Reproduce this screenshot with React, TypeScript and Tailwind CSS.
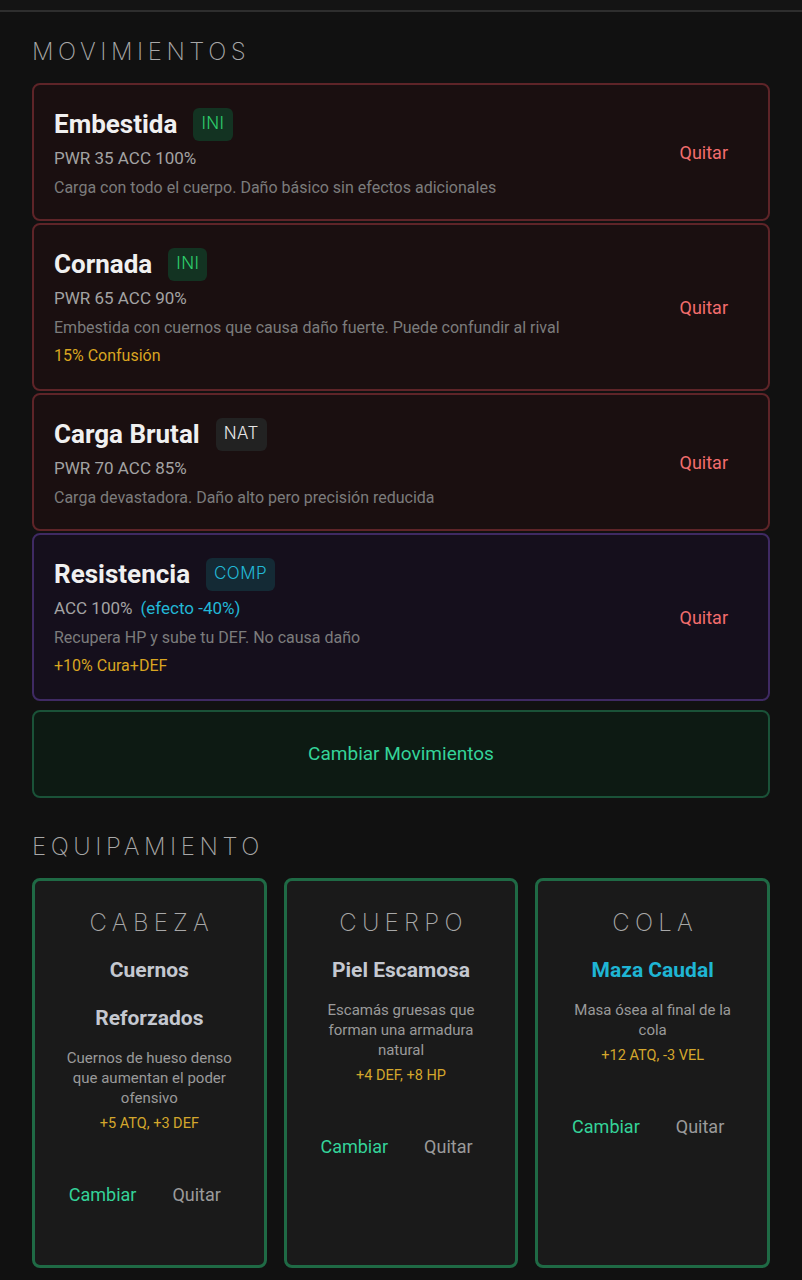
import React from 'react';

type Move = {
  name: string;
  badge: 'INI' | 'NAT' | 'COMP';
  stats: string;
  extra?: string;
  desc: string;
  effect?: string;
  kind: 'red' | 'purple';
};

const moves: Move[] = [
  { name: 'Embestida', badge: 'INI', stats: 'PWR 35 ACC 100%', desc: 'Carga con todo el cuerpo. Daño básico sin efectos adicionales', kind: 'red' },
  { name: 'Cornada', badge: 'INI', stats: 'PWR 65 ACC 90%', desc: 'Embestida con cuernos que causa daño fuerte. Puede confundir al rival', effect: '15% Confusión', kind: 'red' },
  { name: 'Carga Brutal', badge: 'NAT', stats: 'PWR 70 ACC 85%', desc: 'Carga devastadora. Daño alto pero precisión reducida', kind: 'red' },
  { name: 'Resistencia', badge: 'COMP', stats: 'ACC 100%', extra: '(efecto -40%)', desc: 'Recupera HP y sube tu DEF. No causa daño', effect: '+10% Cura+DEF', kind: 'purple' },
];

const equipment = [
  { slot: 'CABEZA', name: 'Cuernos Reforzados', desc: 'Cuernos de hueso denso que aumentan el poder ofensivo', stats: '+5 ATQ, +3 DEF', cyan: false },
  { slot: 'CUERPO', name: 'Piel Escamosa', desc: 'Escamás gruesas que forman una armadura natural', stats: '+4 DEF, +8 HP', cyan: false },
  { slot: 'COLA', name: 'Maza Caudal', desc: 'Masa ósea al final de la cola', stats: '+12 ATQ, -3 VEL', cyan: true },
];

function Badge({ type }: { type: Move['badge'] }) {
  const styles = {
    INI: 'bg-[#133322] text-[#2ecc6a]',
    NAT: 'bg-[#222222] text-[#e5e5e5]',
    COMP: 'bg-[#142a35] text-[#22b8d6]',
  }[type];
  return (
    <span className={`ml-4 inline-flex h-[33px] items-center rounded-md px-2 font-['Inter',sans-serif] text-[17px] font-light tracking-wide ${styles}`}>
      {type}
    </span>
  );
}

function MoveCard({ move }: { move: Move }) {
  const box =
    move.kind === 'red'
      ? 'border-[#5e2428] bg-[#1a0f10]'
      : 'border-[#3f2a63] bg-[#150f1c]';
  return (
    <div className={`flex items-center justify-between rounded-lg border-2 pl-[20px] pr-6 pb-[21px] pt-[22px] ${box}`}>
      <div className="flex flex-col">
        <div className="flex items-center">
          <span className="text-[26px] font-bold leading-[34px] text-[#f0f0f0]">{move.name}</span>
          <Badge type={move.badge} />
        </div>
        <div className="mt-[5px] text-[17px] leading-[24px] text-[#a3a3a3]">
          {move.stats}
          {move.extra && <span className="ml-2 text-[#22b8d6]">{move.extra}</span>}
        </div>
        <div className="mt-[8px] text-[16px] leading-[20px] text-[#7c7c7c]">{move.desc}</div>
        {move.effect && <div className="mb-[2px] mt-[8px] text-[16px] leading-[20px] text-[#d9a521]">{move.effect}</div>}
      </div>
      <button className="px-4 text-[18px] text-[#f26d6d]">Quitar</button>
    </div>
  );
}

export default function App() {
  return (
    <div className="min-h-screen bg-[#111111] font-['Roboto',sans-serif]">
      <div className="h-[12px] border-b-2 border-[#2e2e2e] bg-[#141414]" />
      <div className="px-8 pt-[24px] pb-3">
        <h2 className="font-['Inter',sans-serif] text-[24px] font-extralight leading-[32px] tracking-[0.19em] text-[#a8a8a8]">
          MOVIMIENTOS
        </h2>
        <div className="mt-[15px] flex flex-col gap-[2px]">
          {moves.map((m) => (
            <MoveCard key={m.name} move={m} />
          ))}
        </div>
        <button className="mt-[9px] flex h-[88px] w-full items-center justify-center rounded-lg border-2 border-[#1a5238] bg-[#0d1a13] text-[19px] text-[#34d399]">
          Cambiar Movimientos
        </button>

        <h2 className="mt-[33px] font-['Inter',sans-serif] text-[24px] font-extralight leading-[32px] tracking-[0.19em] text-[#a8a8a8]">
          EQUIPAMIENTO
        </h2>
        <div className="mt-[15px] grid grid-cols-3 gap-[17px]">
          {equipment.map((e) => (
            <div key={e.slot} className="flex h-[390px] flex-col items-center rounded-lg border-[3px] border-[#1f6a45] bg-[#1a1a1a] px-7 pt-[26px] text-center">
              <div className="-mr-[5px] font-['Inter',sans-serif] text-[24px] font-extralight leading-[32px] tracking-[0.22em] text-[#a8a8a8]">
                {e.slot}
              </div>
              <div className={`mt-[7px] text-[21px] font-bold leading-[48px] ${e.cyan ? 'text-[#1fb5d4]' : 'text-[#c4c8d0]'}`}>
                {e.name}
              </div>
              <div className="mt-[6px] text-[15px] leading-[20px] text-[#9a9a9a]">{e.desc}</div>
              <div className="mt-[6px] text-[14.5px] leading-[20px] text-[#d4a72c]">{e.stats}</div>
              <div className="mr-[9px] mt-[41px] flex gap-1">
                <button className="px-4 py-1.5 text-[18px] leading-[28px] text-[#34d399]">Cambiar</button>
                <button className="px-4 py-1.5 text-[18px] leading-[28px] text-[#9a9a9a]">Quitar</button>
              </div>
            </div>
          ))}
        </div>
      </div>
    </div>
  );
}
